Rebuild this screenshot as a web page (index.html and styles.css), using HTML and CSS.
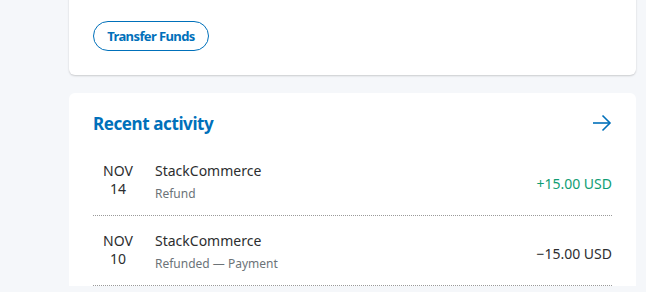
FILE: index.html
```html
<!DOCTYPE html>
<html lang="en">
<head>
    <meta charset="UTF-8">
    <meta name="viewport" content="width=device-width, initial-scale=1.0">
    <title>Summary</title>
    <link rel="stylesheet" href="styles.css">
</head>
<body>
    <div class="page">
        <div class="card card-top">
            <button class="btn-outline" type="button">Transfer Funds</button>
        </div>

        <div class="card activity">
            <div class="activity-head">
                <h2>Recent activity</h2>
                <a class="more" href="#" aria-label="See all activity">
                    <svg width="20" height="18" viewBox="0 0 20 18" fill="none" stroke="#0070ba" stroke-width="1.6">
                        <path d="M1 9h17"/>
                        <path d="M10.5 1.5L18 9l-7.5 7.5"/>
                    </svg>
                </a>
            </div>

            <ul class="tx-list">
                <li class="tx">
                    <div class="tx-date"><span>NOV</span><span>14</span></div>
                    <div class="tx-info">
                        <div class="tx-name">StackCommerce</div>
                        <div class="tx-type">Refund</div>
                    </div>
                    <div class="tx-amount positive">+15.00 USD</div>
                </li>
                <li class="tx">
                    <div class="tx-date"><span>NOV</span><span>10</span></div>
                    <div class="tx-info">
                        <div class="tx-name">StackCommerce</div>
                        <div class="tx-type">Refunded &mdash; Payment</div>
                    </div>
                    <div class="tx-amount">&minus;15.00 USD</div>
                </li>
            </ul>
        </div>
    </div>
</body>
</html>
```

FILE: styles.css
```css
body {
    margin: 0;
    background-color: #f5f7fa;
    font-family: "Noto Sans", Arial, sans-serif;
    color: #2c2e2f;
}
.page {
    width: 567px;
    margin-left: 69px;
}
.card {
    background-color: #fff;
    border-radius: 6px;
    box-shadow: 0 1px 2px rgba(0, 0, 0, 0.18);
}
.card-top {
    margin-top: -20px;
    padding: 41px 24px 24px;
}
.btn-outline {
    height: 30px;
    width: 116px;
    padding: 0;
    border: 1px solid #0070ba;
    border-radius: 15px;
    background: #fff;
    color: #0070ba;
    font-family: inherit;
    font-size: 13px;
    font-weight: 700;
    letter-spacing: -0.6px;
    cursor: pointer;
}
.activity {
    margin-top: 18px;
    padding: 17px 24px 0;
    box-shadow: none;
    border-radius: 6px 6px 0 0;
}
.activity-head {
    display: flex;
    justify-content: space-between;
    align-items: center;
}
.activity-head h2 {
    margin: 0;
    font-size: 17px;
    line-height: 28px;
    font-weight: 700;
    letter-spacing: -0.4px;
    color: #0070ba;
}
.more {
    display: flex;
    margin-top: -2px;
}
.tx-list {
    list-style: none;
    margin: 8px 0 0;
    padding: 0;
}
.tx {
    display: flex;
    align-items: flex-start;
    padding: 16px 0 12px;
    border-bottom: 1px dotted #9a9a9a;
}
.tx-date {
    width: 62px;
    display: flex;
    flex-direction: column;
    align-items: center;
    font-size: 14px;
    line-height: 18px;
    box-sizing: border-box;
    padding-right: 12px;
}
.tx-info {
    flex: 1;
}
.tx-name {
    font-size: 14px;
    line-height: 18px;
}
.tx-type {
    font-size: 12px;
    line-height: 18px;
    color: #6c7378;
    margin-top: 5px;
}
.tx-amount {
    font-size: 14px;
    line-height: 18px;
    margin-top: 13px;
}
.tx-amount.positive {
    color: #0f9d73;
}
```
